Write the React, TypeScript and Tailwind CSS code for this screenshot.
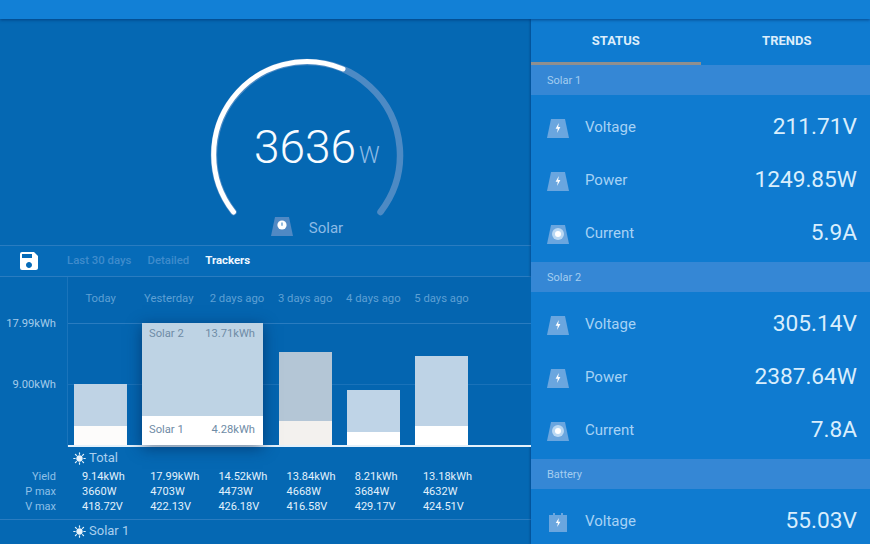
import React from 'react';
import { MdSave } from 'react-icons/md';

const days = [
  { label: 'Today', total: 61, split: 19, top: 'bg-[#bfd3e5]', bottom: 'bg-[#fdfcfb]' },
  { label: 'Yesterday', total: 0, split: 0, top: '', bottom: '' },
  { label: '2 days ago', total: 0, split: 0, top: '', bottom: '' },
  { label: '3 days ago', total: 93, split: 24, top: 'bg-[#b4c6d6]', bottom: 'bg-[#f3f1ee]' },
  { label: '4 days ago', total: 55, split: 13, top: 'bg-[#bfd4e7]', bottom: 'bg-white' },
  { label: '5 days ago', total: 89, split: 19, top: 'bg-[#bed3e6]', bottom: 'bg-white' },
];

const totals = [
  ['9.14kWh', '3660W', '418.72V'],
  ['17.99kWh', '4703W', '422.13V'],
  ['14.52kWh', '4473W', '426.18V'],
  ['13.84kWh', '4668W', '416.58V'],
  ['8.21kWh', '3684W', '429.17V'],
  ['13.18kWh', '4632W', '424.51V'],
];

const solar1 = [
  ['1.92kWh', '1660W', '211.71V'],
  ['4.28kWh', '2103W', '222.13V'],
  ['3.61kWh', '1973W', '226.18V'],
  ['3.05kWh', '2068W', '216.58V'],
  ['1.44kWh', '1584W', '229.17V'],
  ['2.96kWh', '2032W', '224.51V'],
];

const SolarIcon = ({ kind, muted = false }: { kind: 'bolt' | 'ring' | 'clock'; muted?: boolean }) => (
  <svg width="22" height="20" viewBox="0 0 22 20" className="shrink-0">
    <path d="M4 1h14l4 19H0z" fill={muted ? '#5089c4' : '#6aa6df'} />
    {kind === 'bolt' && <path d="M11.8 5 8.6 10.8h2.2L10 15l3.4-6h-2.2z" fill="#ffffff" />}
    {kind === 'ring' && (
      <>
        <circle cx="11" cy="10" r="6" fill="#b9d8f3" />
        <circle cx="11" cy="10" r="3" fill="#ffffff" />
      </>
    )}
    {kind === 'clock' && (
      <>
        <circle cx="11" cy="9" r="4.6" fill="#ffffff" />
        <path d="M10.4 6.4h1.2v3.4h-1.2z" fill="#4f8fc8" />
      </>
    )}
  </svg>
);

const BatteryIcon = () => (
  <svg width="22" height="20" viewBox="0 0 22 20" className="shrink-0">
    <path d="M2 3h4V1h2v2h6V1h2v2h4v17H2z" fill="#6aa6df" />
    <path d="M11.8 6 8.8 11h2.1L10.2 15l3.2-5.2h-2.1z" fill="#ffffff" />
  </svg>
);

const SunIcon = () => (
  <svg width="13" height="13" viewBox="0 0 14 14" className="shrink-0">
    <circle cx="7" cy="7" r="3.4" fill="#e8f3fb" />
    <g stroke="#e8f3fb" strokeWidth="1.3" strokeLinecap="round">
      <path d="M7 .8v1.5M7 11.7v1.5M.8 7h1.5M11.7 7h1.5M2.6 2.6l1.1 1.1M10.3 10.3l1.1 1.1M2.6 11.4l1.1-1.1M10.3 3.7l1.1-1.1" />
    </g>
  </svg>
);

const Gauge = () => (
  <div className="flex h-[226px] flex-col items-center pl-[83px] pt-[36px]">
    <div className="relative h-[160px] w-[200px]">
      <svg width="200" height="170" viewBox="0 0 200 170">
        <path d="M26.5 157A93 93 0 1 1 173.5 157" fill="none" stroke="#4d8ac4" strokeWidth="6.5" strokeLinecap="round" />
        <path d="M26.5 157A93 93 0 0 1 136 14" fill="none" stroke="#ffffff" strokeWidth="5" strokeLinecap="round" />
      </svg>
      <div className="absolute left-[47px] top-[65px] flex items-baseline font-light text-[#f7fbff]">
        <span className="text-[46px] leading-[54px]">3636</span>
        <span className="ml-[3px] text-[23px] leading-[54px] text-[#8fbce6]">W</span>
      </div>
    </div>
    <div className="flex h-[26px] items-center gap-[16px]">
      <div className="mb-[4px]">
        <SolarIcon kind="clock" muted />
      </div>
      <span className="text-[15px] text-[#8cbbe6]">Solar</span>
    </div>
  </div>
);

const TabBar = () => (
  <div className="flex h-[32px] items-center border-t border-b border-[#2a7cc0] bg-[#066bb8]">
    <div className="w-[67px] pl-[17px]">
      <MdSave size={24} color="#ffffff" />
    </div>
    <span className="text-[11.4px] font-medium text-[#3f8bcc]">Last 30 days</span>
    <span className="ml-[16px] text-[11.4px] font-medium text-[#3f8bcc]">Detailed</span>
    <span className="ml-[16px] text-[11.4px] font-bold text-[#eef7ff]">Trackers</span>
  </div>
);

const Chart = () => (
  <div className="flex h-[170px]">
    <div className="w-[67px] shrink-0 pr-[11px] pt-[39px] text-right text-[11.2px] leading-[16px] text-[#a4cbea]">
      <div>17.99kWh</div>
      <div className="mt-[45px]">9.00kWh</div>
    </div>
    <div className="relative flex-1 border-l border-[#1a74bb] bg-[#0465b0]">
      <div className="flex h-[46px]">
        {days.map((d) => (
          <div key={d.label} className="w-[68.2px] pr-[3px] pt-[14px] text-center text-[11.3px] leading-[16px] text-[#5ea0d4]">
            {d.label}
          </div>
        ))}
      </div>
      <div className="absolute left-0 right-0 top-[107px] h-px bg-[#2a7cc0] opacity-60" />
      <div className="relative flex h-[122px] items-end border-t border-[#2a7cc0]">
        {days.map((d) => (
          <div key={d.label} className="w-[68.2px] pl-[6px]">
            {d.total > 0 && (
              <div className="flex w-[53px] flex-col" style={{ height: d.total }}>
                <div className={`flex-1 ${d.top}`} />
                <div className={d.bottom} style={{ height: d.split }} />
              </div>
            )}
          </div>
        ))}
      </div>
      <div className="h-[2px] bg-[#e4f1fb]" />
      <div className="absolute left-[74px] top-[46px] flex h-[122px] w-[121px] flex-col text-[11.2px] text-[#6f8ca6] shadow-[0_3px_14px_rgba(0,30,70,0.55)]">
        <div className="flex flex-1 justify-between bg-[#bed3e4] pl-[7px] pr-[8px] pt-[3px]">
          <span>Solar 2</span>
          <span>13.71kWh</span>
        </div>
        <div className="flex h-[29px] items-center justify-between bg-white pl-[7px] pr-[8px]">
          <span>Solar 1</span>
          <span>4.28kWh</span>
        </div>
      </div>
    </div>
  </div>
);

const Stats = ({ title, rows }: { title: string; rows: string[][] }) => (
  <div className="h-[73px] border-b border-[#2a7cc0]">
    <div className="flex h-[22px] items-center gap-[3px] pl-[73px] text-[13px] text-[#a9cfee]">
      <SunIcon />
      <span>{title}</span>
    </div>
    <div className="flex text-[11px] leading-[15px]">
      <div className="w-[67px] shrink-0 pr-[11px] text-right text-[#8fc0e8]">
        <div>Yield</div>
        <div>P max</div>
        <div>V max</div>
      </div>
      {rows.map((r) => (
        <div key={r[0]} className="w-[68.2px] pl-[15px] text-[#e2f1fc]">
          {r.map((v) => (
            <div key={v}>{v}</div>
          ))}
        </div>
      ))}
    </div>
  </div>
);

const Section = ({ title }: { title: string }) => (
  <div className="flex h-[30px] items-center bg-[#3587d5] pl-[16px] pt-[2px] text-[11px] text-[#a4cdf0]">{title}</div>
);

const Row = ({ icon, label, value }: { icon: React.ReactNode; label: string; value: string }) => (
  <div className="flex h-[53px] items-center pl-[16px] pr-[13px]">
    {icon}
    <span className="ml-[16px] text-[15px] text-[#a6d2f5]">{label}</span>
    <span className="ml-auto text-[22.7px] text-[#d9eefd]">{value}</span>
  </div>
);

export default function App() {
  return (
    <div className="flex h-[544px] w-[870px] flex-col overflow-hidden bg-[#0568b3] font-['Roboto',sans-serif]">
      <div className="relative z-10 h-[19px] shrink-0 bg-[#1280d6] shadow-[0_1px_3px_rgba(0,40,100,0.6)]" />
      <div className="flex min-h-0 flex-1">
        <div className="w-[531px] shrink-0 overflow-hidden">
          <Gauge />
          <TabBar />
          <Chart />
          <Stats title="Total" rows={totals} />
          <Stats title="Solar 1" rows={solar1} />
        </div>
        <div className="flex-1 overflow-hidden bg-[#0f7bd0] shadow-[-1px_0_2px_rgba(0,40,100,0.4)]">
          <div className="flex h-[46px] text-[13px] font-bold text-[#dcedfb]">
            <div className="flex w-[170px] items-center justify-center border-b-[3px] border-[#8f8f8f]">STATUS</div>
            <div className="flex w-[170px] items-center justify-center pb-[3px] pl-[3px]">TRENDS</div>
          </div>
          <Section title="Solar 1" />
          <div className="h-[167px] pt-[6px]">
            <Row icon={<SolarIcon kind="bolt" />} label="Voltage" value="211.71V" />
            <Row icon={<SolarIcon kind="bolt" />} label="Power" value="1249.85W" />
            <Row icon={<SolarIcon kind="ring" />} label="Current" value="5.9A" />
          </div>
          <Section title="Solar 2" />
          <div className="h-[167px] pt-[6px]">
            <Row icon={<SolarIcon kind="bolt" />} label="Voltage" value="305.14V" />
            <Row icon={<SolarIcon kind="bolt" />} label="Power" value="2387.64W" />
            <Row icon={<SolarIcon kind="ring" />} label="Current" value="7.8A" />
          </div>
          <Section title="Battery" />
          <div className="pt-[6px]">
            <Row icon={<BatteryIcon />} label="Voltage" value="55.03V" />
          </div>
        </div>
      </div>
    </div>
  );
}
